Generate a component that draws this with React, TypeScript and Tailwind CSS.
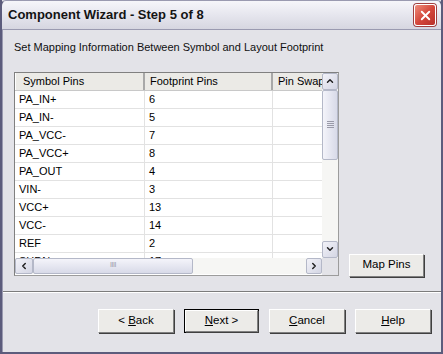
import React from "react"
import { ChevronUp, ChevronDown, ChevronLeft, ChevronRight, X } from "lucide-react"

const pins: [string, string][] = [
    ["PA_IN+", "6"],
    ["PA_IN-", "5"],
    ["PA_VCC-", "7"],
    ["PA_VCC+", "8"],
    ["PA_OUT", "4"],
    ["VIN-", "3"],
    ["VCC+", "13"],
    ["VCC-", "14"],
    ["REF", "2"],
    ["SHDN", "17"],
]

function ScrollBtn({ children, className = "" }: { children: React.ReactNode; className?: string }) {
    return (
        <div className={`flex items-center justify-center rounded-[2px] border border-[#b4b8c8] bg-gradient-to-br from-[#f2f2f8] to-[#d4d6e4] text-[#202020] ${className}`}>
            {children}
        </div>
    )
}

function WinButton({ children, primary = false, className = "" }: { children: React.ReactNode; primary?: boolean; className?: string }) {
    return (
        <div className={`${primary ? "border border-black" : ""} ${className}`}>
            <div className="flex h-full w-full items-center justify-center whitespace-pre border border-t-white border-l-white border-b-[#808080] border-r-[#808080] bg-[#ecebe8] text-[11.5px] text-black shadow-[1px_1px_0_#404040]">
                {children}
            </div>
        </div>
    )
}

export default function App() {
    return (
        <div className="h-[354px] w-[443px] overflow-hidden bg-[#e3e3e8] font-['Liberation_Sans',sans-serif]">
            <div className="flex h-full w-full flex-col border-2 border-[#5c5c7c] border-t-0 border-t-transparent">
                {/* title bar */}
                <div className="-mx-[2px] flex h-[29px] items-center justify-between rounded-t-[6px] border-x-2 border-[#5c5c7c] border-t border-t-[#9a9ab0] bg-gradient-to-b from-[#f6f6fa] via-[#e6e6ee] to-[#d6d6e0] pl-[6px] pr-[5px]">
                    <span className="text-[13px] font-bold text-[#141414]">Component Wizard - Step 5 of 8</span>
                    <div className="flex h-[22px] w-[22px] items-center justify-center rounded-[3px] border border-white bg-gradient-to-br from-[#ee8c7c] via-[#d4483c] to-[#b8302a] shadow-[0_0_0_1px_#a04040]">
                        <X size={15} strokeWidth={3} className="text-white" />
                    </div>
                </div>

                <div className="flex flex-1 flex-col border-l border-t border-[#9a9ab0]">
                    <div className="pl-[11px] pt-[9px] text-[11px] text-[#101010]">
                        Set Mapping Information Between Symbol and Layout Footprint
                    </div>

                    <div className="mt-[16px] flex items-end pl-[11px]">
                        {/* table */}
                        <div className="flex h-[204px] w-[325px] border border-[#9c9c9c] border-t-[#808080] border-l-[#808080] bg-white">
                            <div className="flex w-[307px] flex-col">
                                <div className="h-[185px] overflow-hidden text-[11px] text-black">
                                    <div className="flex h-[18px] border-b border-[#c8c8c8] bg-[#ebeae6]">
                                        <div className="flex w-[130px] items-center border-r-2 border-r-[#a8a8a8] border-l border-l-white pl-[7px]">Symbol Pins</div>
                                        <div className="flex w-[128px] items-center border-r-2 border-r-[#a8a8a8] pl-[5px]">Footprint Pins</div>
                                        <div className="flex flex-1 items-center overflow-hidden whitespace-nowrap pl-[5px]">Pin Swap Group</div>
                                    </div>
                                    {pins.map(([sym, fp]) => (
                                        <div key={sym} className="flex h-[18px] border-b border-[#e2e2e2]">
                                            <div className="flex w-[130px] items-center border-r border-[#e2e2e2] pl-[4px]">{sym}</div>
                                            <div className="flex w-[128px] items-center border-r border-[#e2e2e2] pl-[4px]">{fp}</div>
                                            <div className="flex-1" />
                                        </div>
                                    ))}
                                </div>
                                {/* horizontal scrollbar */}
                                <div className="flex h-[16px] bg-[#f6f6f4]">
                                    <ScrollBtn className="w-[18px]"><ChevronLeft size={10} strokeWidth={3.5} /></ScrollBtn>
                                    <div className="flex w-[160px] items-center justify-center rounded-[2px] border border-[#b4b8c8] bg-gradient-to-b from-[#f4f4fa] to-[#d8dae8] text-[7px] tracking-[-0.5px] text-[#9a9aa8]">IIII</div>
                                    <div className="flex-1" />
                                    <ScrollBtn className="w-[16px]"><ChevronRight size={10} strokeWidth={3.5} /></ScrollBtn>
                                </div>
                            </div>
                            {/* vertical scrollbar */}
                            <div className="flex w-[16px] flex-col bg-[#f6f6f4]">
                                <ScrollBtn className="h-[17px]"><ChevronUp size={10} strokeWidth={3.5} /></ScrollBtn>
                                <div className="flex h-[70px] flex-col items-center justify-center gap-[1px] rounded-[2px] border border-[#b4b8c8] bg-gradient-to-r from-[#f4f4fa] to-[#d8dae8]">
                                    <div className="h-px w-[7px] bg-[#9a9aa8]" />
                                    <div className="h-px w-[7px] bg-[#9a9aa8]" />
                                    <div className="h-px w-[7px] bg-[#9a9aa8]" />
                                    <div className="h-px w-[7px] bg-[#9a9aa8]" />
                                </div>
                                <div className="flex-1" />
                                <ScrollBtn className="h-[17px]"><ChevronDown size={10} strokeWidth={3.5} /></ScrollBtn>
                                <div className="h-[17px] bg-[#e3e3e8]" />
                            </div>
                        </div>

                        <WinButton className="mb-[-1px] ml-[10px] h-[23px] w-[75px]">Map Pins</WinButton>
                    </div>

                    {/* separator */}
                    <div className="mt-[15px] h-[2px] border-t border-t-[#7c7c7c] border-b border-b-white" />

                    <div className="mt-[16px] flex justify-end gap-[10px] pr-[10px]">
                        <WinButton className="h-[24px] w-[76px]">{"< "}<u>B</u>ack</WinButton>
                        <WinButton primary className="h-[24px] w-[75px]"><u>N</u>ext{" >"}</WinButton>
                        <WinButton className="h-[24px] w-[76px]"><u>C</u>ancel</WinButton>
                        <WinButton className="h-[24px] w-[76px]"><u>H</u>elp</WinButton>
                    </div>
                </div>
            </div>
        </div>
    )
}
